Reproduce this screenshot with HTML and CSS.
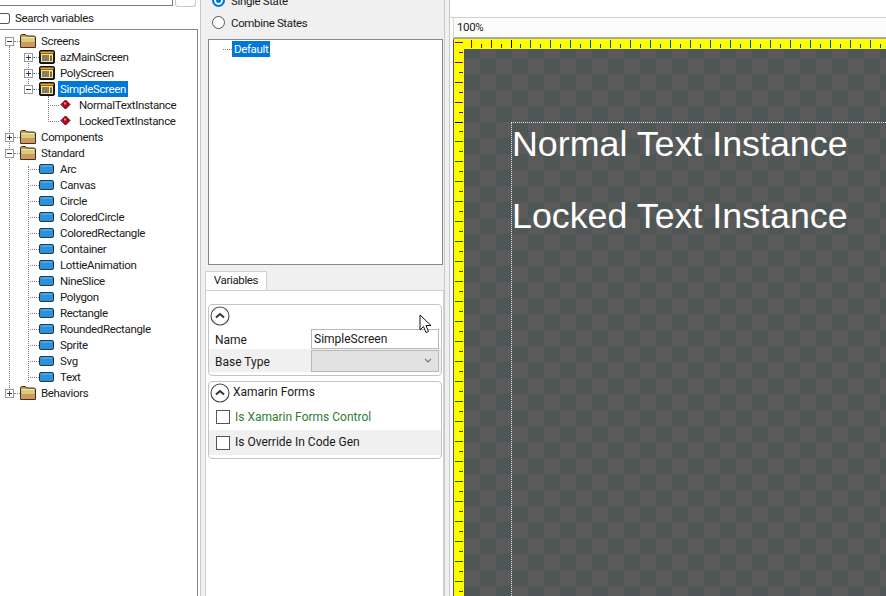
FILE: index.html
```html
<!DOCTYPE html>
<html lang="en">

<head>
    <meta charset="UTF-8">
    <title>Gum</title>
    <link rel="stylesheet" href="styles.css">
</head>

<body>
    <svg class="defs" width="0" height="0">
        <symbol id="folder" viewBox="0 0 16 16">
            <path d="M0.500 14.500v-12l1-1h4l1 1.500h8l1 1v10.500z" fill="#c9955c" stroke="#3f3320"/>
            <path d="M1.500 5h13v4h-13z" fill="#d6cf78"/>
            <path d="M1.500 4h13v1h-13z" fill="#f2eeb8"/>
            <path d="M1.500 9h13v4.500h-13z" fill="#d09a5e"/>
        </symbol>
        <symbol id="screen" viewBox="0 0 16 16">
            <rect x="0.500" y="1.500" width="15" height="13" rx="1.500" fill="#1f1f18" stroke="#111"/>
            <rect x="1.500" y="2.500" width="13" height="2" fill="#f7a71c"/>
            <rect x="2" y="5" width="12" height="8" fill="#f7e39a"/>
            <path d="M3 7h7M3 9h7M3 11h7M12 6.500v5.500" stroke="#1f1f18" stroke-width="1.200"/>
        </symbol>
        <symbol id="standard" viewBox="0 0 16 16">
            <rect x="0.500" y="3.500" width="14" height="9" rx="1.500" fill="#2f8fd8" stroke="#123a5c"/>
            <path d="M2 5h11" stroke="#6ab7ec"/>
        </symbol>
        <symbol id="instance" viewBox="0 0 16 16">
            <path d="M6.500 3l4.500 4.500-4.500 4.500-4.500-4.500z" fill="#c4001a" stroke="#4a000c"/>
            <rect x="5" y="5.500" width="2" height="2" fill="#f08a8a"/>
        </symbol>
        <symbol id="collapse" viewBox="0 0 20 20">
            <circle cx="10" cy="10" r="9" fill="#fff" stroke="#444" stroke-width="1.100"/>
            <path d="M6 11.500l4-3.500 4 3.500" fill="none" stroke="#333" stroke-width="2"/>
        </symbol>
    </svg>

    <div class="app">
        <aside class="left-panel">
            <div class="search-top">
                <div class="search-input"></div>
                <div class="search-button"></div>
            </div>
            <label class="search-check"><span class="check round"></span>Search variables</label>
            <div class="tree">
                <span class="guide guide-root"></span>
                <span class="guide guide-screens"></span>
                <span class="guide guide-simple"></span>
                <span class="guide guide-standard"></span>

                <div class="row depth0"><span class="exp minus"></span><span class="dash"></span><svg class="icon"><use href="#folder"/></svg><span class="label">Screens</span></div>
                <div class="row depth1"><span class="exp plus"></span><span class="dash"></span><svg class="icon"><use href="#screen"/></svg><span class="label">azMainScreen</span></div>
                <div class="row depth1"><span class="exp plus"></span><span class="dash"></span><svg class="icon"><use href="#screen"/></svg><span class="label">PolyScreen</span></div>
                <div class="row depth1"><span class="exp minus"></span><span class="dash"></span><svg class="icon"><use href="#screen"/></svg><span class="label selected">SimpleScreen</span></div>
                <div class="row depth2"><span class="dash long"></span><svg class="icon"><use href="#instance"/></svg><span class="label">NormalTextInstance</span></div>
                <div class="row depth2"><span class="dash long"></span><svg class="icon"><use href="#instance"/></svg><span class="label">LockedTextInstance</span></div>
                <div class="row depth0"><span class="exp plus"></span><span class="dash"></span><svg class="icon"><use href="#folder"/></svg><span class="label">Components</span></div>
                <div class="row depth0"><span class="exp minus"></span><span class="dash"></span><svg class="icon"><use href="#folder"/></svg><span class="label">Standard</span></div>
                <div class="row leaf"><span class="dash long"></span><svg class="icon"><use href="#standard"/></svg><span class="label">Arc</span></div>
                <div class="row leaf"><span class="dash long"></span><svg class="icon"><use href="#standard"/></svg><span class="label">Canvas</span></div>
                <div class="row leaf"><span class="dash long"></span><svg class="icon"><use href="#standard"/></svg><span class="label">Circle</span></div>
                <div class="row leaf"><span class="dash long"></span><svg class="icon"><use href="#standard"/></svg><span class="label">ColoredCircle</span></div>
                <div class="row leaf"><span class="dash long"></span><svg class="icon"><use href="#standard"/></svg><span class="label">ColoredRectangle</span></div>
                <div class="row leaf"><span class="dash long"></span><svg class="icon"><use href="#standard"/></svg><span class="label">Container</span></div>
                <div class="row leaf"><span class="dash long"></span><svg class="icon"><use href="#standard"/></svg><span class="label">LottieAnimation</span></div>
                <div class="row leaf"><span class="dash long"></span><svg class="icon"><use href="#standard"/></svg><span class="label">NineSlice</span></div>
                <div class="row leaf"><span class="dash long"></span><svg class="icon"><use href="#standard"/></svg><span class="label">Polygon</span></div>
                <div class="row leaf"><span class="dash long"></span><svg class="icon"><use href="#standard"/></svg><span class="label">Rectangle</span></div>
                <div class="row leaf"><span class="dash long"></span><svg class="icon"><use href="#standard"/></svg><span class="label">RoundedRectangle</span></div>
                <div class="row leaf"><span class="dash long"></span><svg class="icon"><use href="#standard"/></svg><span class="label">Sprite</span></div>
                <div class="row leaf"><span class="dash long"></span><svg class="icon"><use href="#standard"/></svg><span class="label">Svg</span></div>
                <div class="row leaf"><span class="dash long"></span><svg class="icon"><use href="#standard"/></svg><span class="label">Text</span></div>
                <div class="row depth0"><span class="exp plus"></span><span class="dash"></span><svg class="icon"><use href="#folder"/></svg><span class="label">Behaviors</span></div>
            </div>
        </aside>

        <main class="middle-panel">
            <div class="radios">
                <label class="radio-row"><span class="radio checked"></span>Single State</label>
                <label class="radio-row"><span class="radio"></span>Combine States</label>
            </div>
            <div class="state-list">
                <div class="state-row"><span class="dash state-dash"></span><span class="label selected">Default</span></div>
            </div>
            <div class="tab-strip"><div class="tab">Variables</div></div>
            <div class="tab-page">
                <section class="group group-first">
                    <svg class="collapse"><use href="#collapse"/></svg>
                    <div class="field field-name">
                        <span class="field-label">Name</span>
                        <div class="text-box">SimpleScreen</div>
                    </div>
                    <div class="field field-alt">
                        <span class="field-label">Base Type</span>
                        <div class="combo">
                            <svg width="8" height="5" viewBox="0 0 8 5"><path d="M1 1l3 3 3-3" fill="none" stroke="#777" stroke-width="1.200"/></svg>
                        </div>
                    </div>
                </section>
                <section class="group group-second">
                    <div class="group-head"><svg class="collapse"><use href="#collapse"/></svg>Xamarin Forms</div>
                    <div class="check-row green"><span class="check"></span>Is Xamarin Forms Control</div>
                    <div class="check-row check-row-alt"><span class="check"></span>Is Override In Code Gen</div>
                </section>
            </div>
            <svg class="cursor" width="14" height="20" viewBox="0 0 14 20">
                <path d="M1 1v15l3.500-3.500 2.500 6 2.500-1-2.500-6h5z" fill="#fff" stroke="#111" stroke-width="1"/>
            </svg>
        </main>

        <section class="viewer">
            <div class="viewer-top"></div>
            <div class="zoom-bar">100%</div>
            <div class="stage">
                <div class="ruler-left">
                    <div class="ticks-v before"></div>
                    <div class="ticks-v after"></div>
                </div>
                <div class="stage-right">
                    <div class="ruler-top">
                        <div class="ticks-h before"></div>
                        <div class="ticks-h after"></div>
                    </div>
                    <div class="canvas">
                        <div class="screen-frame">
                            <div class="instance">Normal Text Instance</div>
                            <div class="instance">Locked Text Instance</div>
                        </div>
                    </div>
                </div>
            </div>
        </section>
    </div>
</body>

</html>
```

FILE: styles.css
```css
* {
    box-sizing: border-box;
}

body {
    margin: 0;
    height: 596px;
    overflow: hidden;
    font-family: Roboto, sans-serif;
    font-size: 11.500px;
    letter-spacing: -0.350px;
    color: #1a1a1a;
    background-color: #f0f0f0;
}

.defs {
    position: absolute;
}

.app {
    display: grid;
    grid-template-columns: 201px 244px 441px;
    height: 596px;
}

/* left panel */

.left-panel {
    background-color: #fff;
    border-right: 1px solid #c8c8c8;
    overflow: hidden;
}

.search-top {
    display: flex;
    gap: 2px;
    height: 7px;
    width: 198px;
}

.search-input {
    width: 173px;
    height: 6px;
    border: 1px solid #7a7a7a;
    border-top: none;
    border-left: none;
}

.search-button {
    width: 21px;
    height: 7px;
    border: 1px solid #c8c8c8;
    border-top: none;
    border-radius: 0 0 3px 3px;
    background-color: #fdfdfd;
}

.search-check {
    display: flex;
    align-items: center;
    gap: 5px;
    height: 22px;
    margin-left: -2px;
}

.check {
    width: 14px;
    height: 14px;
    flex: none;
    border: 1px solid #555;
    background-color: #fff;
}

.check.round {
    width: 10px;
    height: 11px;
    border-radius: 0 3px 3px 0;
    border-left: none;
    margin-left: 2px;
}

.tree {
    position: relative;
    width: 198px;
    height: 567px;
    padding-top: 3px;
    border-top: 1px solid #828790;
    border-right: 1px solid #828790;
}

.row {
    display: flex;
    align-items: center;
    height: 16px;
    white-space: nowrap;
}

.depth0 { padding-left: 5px; }
.depth1 { padding-left: 24px; }
.depth2 { padding-left: 48px; }
.leaf { padding-left: 28px; }

.depth2 .label {
    margin-left: 2px;
}

.exp {
    position: relative;
    flex: none;
    width: 9px;
    height: 9px;
    border: 1px solid #9a9a9a;
    background-color: #fff;
}

.exp::before {
    content: "";
    position: absolute;
    left: 1px;
    top: 3px;
    width: 5px;
    height: 1px;
    background-color: #333;
}

.plus::after {
    content: "";
    position: absolute;
    left: 3px;
    top: 1px;
    width: 1px;
    height: 5px;
    background-color: #1f3c88;
}

.dash {
    flex: none;
    width: 6px;
    height: 0;
    border-top: 1px dotted #7f7f7f;
}

.dash.long {
    width: 11px;
}

.icon {
    flex: none;
    width: 16px;
    height: 16px;
}

.label {
    margin-left: 3px;
    padding: 0 2px;
    line-height: 16px;
    height: 16px;
}

.selected {
    background-color: #0078d7;
    color: #fff;
}

.guide {
    position: absolute;
    width: 0;
    border-left: 1px dotted #7f7f7f;
}

.guide-root { left: 9px; top: 16px; height: 344px; }
.guide-screens { left: 28px; top: 24px; height: 36px; }
.guide-simple { left: 48px; top: 66px; height: 24px; }
.guide-standard { left: 28px; top: 136px; height: 216px; }

/* middle panel */

.middle-panel {
    position: relative;
    padding-left: 4px;
    overflow: hidden;
    border-right: 1px solid #c8c8c8;
}

.radios {
    display: flex;
    flex-direction: column;
    margin-top: -10px;
    height: 49px;
}

.radio-row {
    display: flex;
    align-items: center;
    gap: 6px;
    height: 21px;
    padding-left: 7px;
}

.radios .radio-row:last-child {
    margin-top: 1px;
}

.radio {
    width: 13px;
    height: 13px;
    flex: none;
    border: 1px solid #555;
    border-radius: 50%;
    background-color: #fff;
}

.radio.checked {
    border: 2px solid #0078d7;
    box-shadow: inset 0 0 0 2px #fff;
    background-color: #0078d7;
}

.state-list {
    width: 235px;
    height: 226px;
    margin-left: 3px;
    padding: 1px 0 0 14px;
    border: 1px solid #828790;
    background-color: #fff;
}

.state-row {
    display: flex;
    align-items: center;
    height: 16px;
}

.state-dash {
    width: 9px;
}

.state-row .label {
    margin-left: 0;
}

.tab-strip {
    display: flex;
    height: 25px;
    padding-top: 6px;
}

.tab {
    position: relative;
    width: 62px;
    height: 19px;
    margin-bottom: -1px;
    line-height: 17px;
    text-align: center;
    background-color: #fff;
    border: 1px solid #d0d0d0;
    border-bottom: none;
}

.tab-page {
    height: 320px;
    padding: 13px 1px 0 2px;
    background-color: #fff;
    border: 1px solid #d0d0d0;
    border-bottom: none;
}

.group {
    font-size: 12px;
    letter-spacing: 0;
    border: 1px solid #c4c4c4;
    border-radius: 4px;
    background-color: #fff;
    overflow: hidden;
}

.group-first {
    height: 72px;
    padding-top: 1px;
    margin-bottom: 5px;
}

.group-second {
    height: 78px;
}

.collapse {
    display: block;
    width: 20px;
    height: 20px;
    margin-left: 1px;
    flex: none;
}

.field {
    display: flex;
    align-items: center;
    justify-content: space-between;
    height: 23px;
    padding: 0 2px 0 6px;
}

.field-label {
    padding-top: 3px;
}

.field-name {
    margin-top: 2px;
    height: 21px;
}

.field-alt {
    background-color: #f0f0f0;
}

.text-box {
    width: 128px;
    height: 20px;
    padding-left: 2px;
    line-height: 18px;
    background-color: #fff;
    border: 1px solid #b8b8b8;
}

.combo {
    display: flex;
    align-items: center;
    justify-content: flex-end;
    width: 128px;
    height: 22px;
    padding-right: 6px;
    background-color: #e2e2e2;
    border: 1px solid #b8b8b8;
}

.group-head {
    display: flex;
    align-items: center;
    gap: 3px;
    height: 22px;
    padding-bottom: 3px;
}

.group-head .collapse {
    margin-top: 3px;
}

.check-row {
    display: flex;
    align-items: center;
    gap: 5px;
    height: 25px;
    padding: 0 0 2px 7px;
}

.check-row .check {
    margin-top: 2px;
}

.check-row.green {
    height: 26px;
    padding-bottom: 0;
    color: #2e7d32;
}

.check-row.green .check {
    margin-top: 0;
}

.check-row-alt {
    background-color: #f0f0f0;
}

.cursor {
    position: absolute;
    left: 218px;
    top: 314px;
}

/* viewer */

.viewer {
    display: flex;
    flex-direction: column;
    height: 596px;
    margin-left: 4px;
    padding-left: 3px;
    overflow: hidden;
    background-color: #fff;
    border-left: 1px solid #c8c8c8;
}

.viewer-top {
    height: 18px;
    margin-left: -3px;
    border-bottom: 1px solid #d0d0d0;
}

.zoom-bar {
    height: 21px;
    padding-left: 3px;
    line-height: 19px;
    background-color: #fcfcfc;
    border-left: 1px solid #d8d8d8;
    border-bottom: 2px solid #a8a8a8;
}

.stage {
    display: flex;
    flex: 1;
    min-height: 0;
    border-left: 1px solid #555;
}

.ruler-left {
    width: 10px;
    flex: none;
    display: flex;
    flex-direction: column;
    background-color: #ff0;
}

.stage-right {
    flex: 1;
    min-width: 0;
    display: flex;
    flex-direction: column;
}

.ruler-top {
    display: flex;
    height: 10px;
    flex: none;
    background-color: #ff0;
}

/* tall tick every 20px, short tick halfway between, red left of origin and green right */

.ticks-h {
    --c: #006400;
    background-repeat: no-repeat;
    background-position: 0 1px, 0 5px;
    background-size: 100% 8px, 100% 4px;
    background-image:
        repeating-linear-gradient(90deg, transparent 0 19px, var(--c) 19px 20px),
        repeating-linear-gradient(90deg, transparent 0 9px, var(--c) 9px 10px, transparent 10px 20px);
}

.ticks-h.before {
    --c: #8b0000;
    width: 47px;
    flex: none;
    background-image:
        repeating-linear-gradient(90deg, transparent 0 7px, var(--c) 7px 8px, transparent 8px 20px),
        repeating-linear-gradient(90deg, transparent 0 17px, var(--c) 17px 18px, transparent 18px 20px);
}

.ticks-h.after {
    flex: 1;
    position: relative;
}

.ticks-h.after::before {
    content: "";
    position: absolute;
    left: 0;
    top: 1px;
    width: 1px;
    height: 8px;
    background-color: #000;
}

.ticks-v {
    --c: #006400;
    background-repeat: no-repeat;
    background-position: 1px 0, 5px 0;
    background-size: 8px 100%, 4px 100%;
    background-image:
        repeating-linear-gradient(180deg, transparent 0 19px, var(--c) 19px 20px),
        repeating-linear-gradient(180deg, transparent 0 9px, var(--c) 9px 10px, transparent 10px 20px);
}

.ticks-v.before {
    --c: #8b0000;
    height: 83px;
    flex: none;
    background-image:
        repeating-linear-gradient(180deg, transparent 0 3px, var(--c) 3px 4px, transparent 4px 20px),
        repeating-linear-gradient(180deg, transparent 0 13px, var(--c) 13px 14px, transparent 14px 20px);
}

.ticks-v.after {
    flex: 1;
    position: relative;
}

.ticks-v.after::before {
    content: "";
    position: absolute;
    left: 1px;
    top: 0;
    width: 8px;
    height: 1px;
    background-color: #000;
}

.canvas {
    position: relative;
    flex: 1;
    background-image: conic-gradient(#5a5a5a 25%, #4e5656 0 50%, #5a5a5a 0 75%, #4e5656 0);
    background-size: 32px 32px;
    background-position: 0 -7px;
}

.screen-frame {
    position: absolute;
    left: 47px;
    top: 73px;
    right: -10px;
    bottom: -10px;
    display: flex;
    flex-direction: column;
    gap: 30px;
    border-top: 1px dotted #cfeef8;
    border-left: 1px dotted #cfeef8;
}

.instance {
    font-family: "Liberation Sans", sans-serif;
    font-size: 35.800px;
    letter-spacing: 0;
    line-height: 42px;
    color: #fff;
    white-space: nowrap;
}
```
